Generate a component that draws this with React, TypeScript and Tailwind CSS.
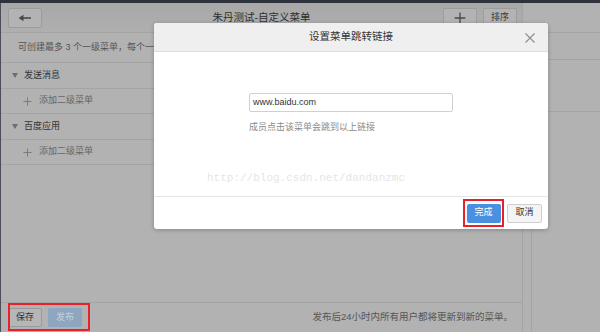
const font = { fontFamily: '"Liberation Sans", "Noto Sans CJK SC", sans-serif' };

function PlusIcon({ size, className }: { size: number; className?: string }) {
  return (
    <svg width={size} height={size} viewBox="0 0 10 10" className={className}>
      <path d="M5 0.5V9.5M0.5 5H9.5" stroke="currentColor" strokeWidth="1.1" fill="none" />
    </svg>
  );
}

function MenuRow({ label }: { label: string }) {
  return (
    <div className="flex h-[26px] items-center border-b border-[#a4a4a4] pl-[11px] text-[9px] text-[#333]">
      <svg width="6" height="5" viewBox="0 0 6 5" className="mr-[6px]">
        <path d="M0 0H6L3 5Z" fill="#6e6e6e" />
      </svg>
      <span>{label}</span>
    </div>
  );
}

function AddRow() {
  return (
    <div className="flex h-[25px] items-center border-b border-[#a4a4a4] pl-[22px] text-[9px] text-[#666]">
      <PlusIcon size={9} className="mr-[7px] text-[#7a7a7a]" />
      <span>添加二级菜单</span>
    </div>
  );
}

export default function App() {
  return (
    <div className="relative h-[332px] w-[600px] overflow-hidden bg-[#b2b2b2]" style={font}>
      <div className="h-[3px] bg-[#2d323b]" />
      <div className="flex h-[329px]">
        <div className="w-px bg-[#4a4f57]" />

        {/* main panel */}
        <div className="flex w-[522px] flex-col border-r border-[#a4a4a4]">
          <div className="relative flex h-[30px] items-center justify-center border-b border-[#a4a4a4] bg-gradient-to-b from-[#a8a8a8] to-[#afafaf]">
            <div className="absolute left-[7px] top-[5px] flex h-[20px] w-[34px] items-center justify-center rounded-[2px] border border-[#9c9c9c] bg-[#b3b3b3]">
              <svg width="14" height="8" viewBox="0 0 14 8">
                <path d="M13 4H5" stroke="#4a4a4a" strokeWidth="1.6" />
                <path d="M0.5 4L5.5 0.8V7.2Z" fill="#4a4a4a" />
              </svg>
            </div>
            <span className="text-[10.5px] text-[#2e2e2e]">朱丹测试-自定义菜单</span>
            <div className="absolute right-[5px] top-[5px] flex gap-[6px]">
              <div className="flex h-[20px] w-[34px] items-center justify-center rounded-[2px] border border-[#9c9c9c] bg-[#b3b3b3]">
                <PlusIcon size={12} className="text-[#4a4a4a]" />
              </div>
              <div className="flex h-[20px] w-[34px] items-center justify-center rounded-[2px] border border-[#9c9c9c] bg-[#b3b3b3] text-[9px] text-[#3a3a3a]">
                排序
              </div>
            </div>
          </div>

          <div className="flex h-[30px] items-center border-b border-[#a4a4a4] pl-[17px] text-[9px] text-[#555]">
            可创建最多 3 个一级菜单，每个一级菜单下可创建最多 5 个二级菜单
          </div>
          <MenuRow label="发送消息" />
          <AddRow />
          <MenuRow label="百度应用" />
          <AddRow />

          <div className="flex-1" />

          <div className="flex h-[30px] items-center border-t border-[#a4a4a4] pl-[7px] pr-[9px]">
            <div className="flex h-[19px] w-[34px] items-center justify-center rounded-[2px] border border-[#9a9a9a] bg-[#b6b6b6] text-[9px] text-[#333]">
              保存
            </div>
            <div className="ml-[6px] flex h-[19px] w-[34px] items-center justify-center rounded-[2px] bg-[#8ea6c0] text-[9px] text-[#c4d0dd]">
              发布
            </div>
            <span className="ml-auto text-[9.5px] text-[#555]">发布后24小时内所有用户都将更新到新的菜单。</span>
          </div>
        </div>

        {/* right column */}
        <div className="flex flex-1 flex-col">
          <div className="h-[30px] border-b border-[#a4a4a4]" />
          <div className="h-[27px] border-b border-[#a4a4a4]" />
          <div className="h-[52px] border-b border-[#a4a4a4]" />
          <div className="flex flex-1">
            <div className="w-[8px]" />
            <div className="flex-1 border-l border-[#a4a4a4]" />
          </div>
        </div>
      </div>

      {/* red highlight around bottom buttons */}
      <div className="absolute left-[8px] top-[303px] h-[28px] w-[82px] border-2 border-[#e8202a]" />

      {/* modal */}
      <div className="absolute left-[154px] top-[23px] flex h-[206px] w-[394px] flex-col overflow-hidden rounded-[3px] bg-white shadow-[0_1px_4px_rgba(0,0,0,0.25)]">
        <div className="relative flex h-[29px] items-center justify-center border-b border-[#dedede] bg-[#efefef]">
          <span className="text-[10.5px] text-[#333]">设置菜单跳转链接</span>
          <svg width="10" height="10" viewBox="0 0 10 10" className="absolute right-[13px] top-[10px]">
            <path d="M0.5 0.5L9.5 9.5M9.5 0.5L0.5 9.5" stroke="#8c8c8c" strokeWidth="1.1" />
          </svg>
        </div>
        <div className="flex flex-1 flex-col items-center pt-[41px]">
          <div className="w-[204px]">
            <div className="flex h-[19px] items-center rounded-[2px] border border-[#d0d0d0] px-[3px] text-[9px] text-[#333]">
              www.baidu.com
            </div>
            <div className="mt-[9px] text-[9px] text-[#8a8a8a]">成员点击该菜单会跳到以上链接</div>
          </div>
          <div className="mt-[35px] w-full pl-[53px] text-[11px] text-[#e6e6e6]" style={{ fontFamily: '"Liberation Mono", monospace' }}>
            http://blog.csdn.net/dandanzmc
          </div>
        </div>
        <div className="flex h-[33px] items-center justify-end gap-[3px] border-t border-[#e6e6e6] pr-[6px]">
          <div className="flex h-[28px] w-[41px] items-center justify-center border-2 border-[#e8202a]">
            <div className="flex h-[19px] w-[34px] items-center justify-center rounded-[2px] bg-[#4a90e2] text-[9px] text-white">
              完成
            </div>
          </div>
          <div className="flex h-[19px] w-[35px] items-center justify-center rounded-[2px] border border-[#cfcfcf] bg-[#f4f4f4] text-[9px] text-[#333]">
            取消
          </div>
        </div>
      </div>
    </div>
  );
}
